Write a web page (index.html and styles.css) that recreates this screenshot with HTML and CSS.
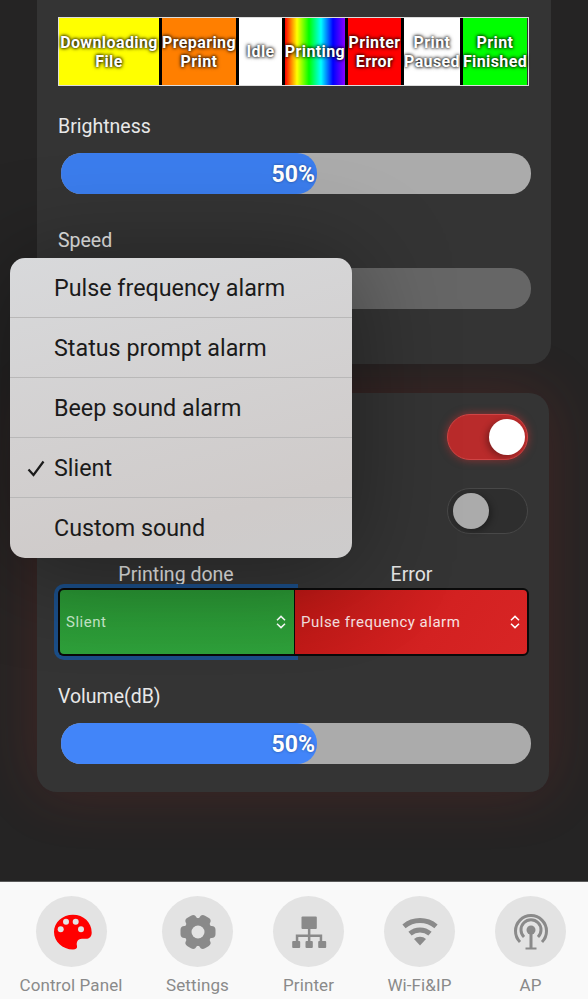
FILE: index.html
```html
<!DOCTYPE html>
<html lang="en">
<head>
  <meta charset="UTF-8">
  <title>Control Panel</title>
  <link rel="stylesheet" href="styles.css">
</head>
<body>
  <div class="app">
    <main class="content">
      <section class="card card-light">
        <div class="strip">
          <div class="seg seg-yellow">Downloading File</div>
          <div class="seg seg-orange">Preparing Print</div>
          <div class="seg seg-white">Idle</div>
          <div class="seg seg-rainbow">Printing</div>
          <div class="seg seg-red">Printer Error</div>
          <div class="seg seg-white">Print Paused</div>
          <div class="seg seg-green">Print Finished</div>
        </div>

        <div class="field-label field-first">Brightness</div>
        <div class="slider"><div class="slider-fill fill-dim">50%</div></div>

        <div class="field-label field-speed">Speed</div>
        <div class="slider slider-off"><div class="slider-fill"></div></div>
      </section>

      <section class="card card-sound">
        <div class="toggle-row">
          <div class="toggle toggle-on"><span class="knob"></span></div>
        </div>
        <div class="toggle-row toggle-row-next">
          <div class="toggle toggle-off"><span class="knob"></span></div>
        </div>

        <div class="select-heads">
          <div>Printing done</div>
          <div>Error</div>
        </div>
        <div class="selects">
          <div class="select select-green">
            <span>Slient</span>
            <svg class="updown" viewBox="0 0 12 16"><path d="M2 6.200 6 2.400l4 3.800M2 9.800l4 3.800 4-3.800"/></svg>
          </div>
          <div class="select select-red">
            <span>Pulse frequency alarm</span>
            <svg class="updown" viewBox="0 0 12 16"><path d="M2 6.200 6 2.400l4 3.800M2 9.800l4 3.800 4-3.800"/></svg>
          </div>
        </div>

        <div class="field-label field-volume">Volume(dB)</div>
        <div class="slider"><div class="slider-fill">50%</div></div>
      </section>
    </main>

    <nav class="tabs">
      <div class="tab tab-wide">
        <div class="tab-icon">
          <svg viewBox="0 0 44 44">
            <path class="palette" d="M24 4.800C13.500 4.800 5 12.500 5 22c0 9.500 8.500 17.500 19 17.500 3 0 4.500-1.500 4-3.500-.7-3 0-7 5-7.200h4c3.500 0 5.700-2.300 5.700-6.300C42.700 12.500 34.500 4.800 24 4.800z"/>
            <circle class="hole" cx="17" cy="11.800" r="3"/>
            <circle class="hole" cx="26.700" cy="11.800" r="3"/>
            <circle class="hole" cx="11.700" cy="19.200" r="3"/>
            <circle class="hole" cx="32" cy="19.200" r="3"/>
          </svg>
        </div>
        <div class="tab-name">Control Panel</div>
      </div>
      <div class="tab">
        <div class="tab-icon">
          <svg viewBox="0 0 44 44">
            <circle class="glyph" cx="22" cy="22" r="14"/>
            <rect class="glyph" x="4.500" y="16" width="35" height="12" rx="4"/>
            <rect class="glyph" x="4.500" y="16" width="35" height="12" rx="4" transform="rotate(60 22 22)"/>
            <rect class="glyph" x="4.500" y="16" width="35" height="12" rx="4" transform="rotate(120 22 22)"/>
            <circle class="hole" cx="22" cy="22" r="6.500"/>
          </svg>
        </div>
        <div class="tab-name">Settings</div>
      </div>
      <div class="tab">
        <div class="tab-icon">
          <svg viewBox="0 0 44 44">
            <rect class="glyph" x="14.500" y="6.500" width="15.300" height="12.500" rx="1"/>
            <path class="glyph" d="M20.900 18h2.500v6.500h11.800v7h-2.500V27H23.400v4.500h-2.500V27H11.300v4.500H8.800v-7h12.100z"/>
            <rect class="glyph" x="5.200" y="31" width="8" height="7" rx="1"/>
            <rect class="glyph" x="18.500" y="31" width="7.300" height="7" rx="1"/>
            <rect class="glyph" x="31.200" y="31" width="8" height="7" rx="1"/>
          </svg>
        </div>
        <div class="tab-name">Printer</div>
      </div>
      <div class="tab">
        <div class="tab-icon">
          <svg viewBox="0 0 44 44">
            <path class="wave" d="M6 16.300a25 25 0 0 1 32 0"/>
            <path class="wave" d="M12 23.600a15.500 15.500 0 0 1 20 0"/>
            <path class="glyph" d="M22 35.500 16 29a9 9 0 0 1 12 0z"/>
          </svg>
        </div>
        <div class="tab-name">Wi-Fi&amp;IP</div>
      </div>
      <div class="tab">
        <div class="tab-icon">
          <svg viewBox="0 0 44 44">
            <path class="wave wave-thin" d="M11 32a15.500 15.500 0 1 1 22 0"/>
            <path class="wave wave-thin" d="M15 27a10 10 0 1 1 14 0"/>
            <circle class="glyph" cx="22" cy="20" r="4.500"/>
            <path class="glyph" d="M20.500 22h3v15.500h4v2h-11v-2h4z"/>
          </svg>
        </div>
        <div class="tab-name">AP</div>
      </div>
    </nav>

    <ul class="menu">
      <li>Pulse frequency alarm</li>
      <li>Status prompt alarm</li>
      <li>Beep sound alarm</li>
      <li class="checked">
        <svg class="tick" viewBox="0 0 18 17"><path d="M1.500 9.500 6.500 15 16.500 1.500"/></svg>
        Slient
      </li>
      <li>Custom sound</li>
    </ul>
  </div>
</body>
</html>
```

FILE: styles.css
```css
body {
  margin: 0;
  font-family: Roboto, "Liberation Sans", sans-serif;
  background-color: #252424;
}
.app {
  position: relative;
  width: 588px;
  height: 999px;
  display: flex;
  flex-direction: column;
  overflow: hidden;
}
.content {
  flex: 1;
  overflow: hidden;
}
.card {
  background-color: #343434;
  box-sizing: border-box;
  margin-left: 37px;
}
.card-light {
  position: relative;
  z-index: 1;
  width: 514px;
  height: 364px;
  padding: 17px 21px 0;
  border-radius: 0 0 20px 20px;
}
.card-sound {
  width: 512px;
  height: 399px;
  margin-top: 29px;
  padding: 21px 21px 0;
  border-radius: 20px;
  box-shadow: 0 0 60px rgba(190, 45, 35, 0.2);
}

.strip {
  display: grid;
  grid-template-columns: 100px 77px 46px 63px 56px 59px 67px;
  width: 471px;
  height: 69px;
  box-sizing: border-box;
  border: 1.500px solid #dcdcdc;
}
.seg {
  display: flex;
  align-items: center;
  justify-content: center;
  box-sizing: border-box;
  border-left: 3px solid #000;
  font-size: 16px;
  font-weight: 700;
  letter-spacing: 0.4px;
  line-height: 19px;
  text-align: center;
  color: #fff;
  text-shadow: 0 0 3px #000, 0 0 4px rgba(0, 0, 0, 0.8);
}
.seg:first-child {
  border-left: none;
}
.seg-yellow { background-color: #ff0; }
.seg-orange { background-color: #ff7f00; }
.seg-white { background-color: #fff; }
.seg-red { background-color: #f00; }
.seg-green { background-color: #0f0; }
.seg-rainbow {
  background: linear-gradient(90deg, #f00, #ff0, #0f0, #0ff, #00f, #80f);
}

.field-label {
  font-size: 19.500px;
  line-height: 22px;
  color: #e8e8e8;
}
.field-first { margin-top: 30px; }
.field-speed { margin-top: 36px; }
.field-volume { margin-top: 30px; }

.slider {
  width: 470px;
  height: 41px;
  margin: 15px 0 0 3px;
  background-color: #ababab;
  border-radius: 20px;
}
.slider-off {
  background-color: #666;
  margin-top: 16px;
}
.slider-fill {
  width: 256px;
  height: 41px;
  box-sizing: border-box;
  padding-right: 2px;
  background-color: #4285f9;
  border-radius: 20px;
  font-size: 23px;
  font-weight: 700;
  line-height: 44px;
  text-align: right;
  color: #fff;
  text-shadow: 0 0 3px rgba(0, 0, 0, 0.4);
}
.fill-dim {
  background-color: #3b7ded;
}

.toggle-row {
  display: flex;
  justify-content: flex-end;
}
.toggle-row-next {
  margin-top: 28px;
}
.toggle {
  display: flex;
  align-items: center;
  width: 81px;
  height: 46px;
  box-sizing: border-box;
  border-radius: 23px;
}
.toggle-on {
  justify-content: flex-end;
  padding-right: 2px;
  background-color: #b92b2b;
  border: 1px solid #cf4545;
  box-shadow: 0 0 9px rgba(225, 50, 50, 0.55);
}
.toggle-off {
  padding-left: 5px;
  background-color: #2e2e2e;
  border: 1px solid #484848;
}
.knob {
  width: 36px;
  height: 36px;
  border-radius: 50%;
}
.toggle-on .knob {
  background-color: #fff;
  box-shadow: -3px 2px 6px rgba(0, 0, 0, 0.3);
}
.toggle-off .knob {
  background-color: #ababab;
  box-shadow: 3px 2px 6px rgba(0, 0, 0, 0.3);
}

.select-heads {
  display: grid;
  grid-template-columns: 236px 235px;
  margin-top: 28px;
  font-size: 19.500px;
  line-height: 26px;
  text-align: center;
  color: #e6e6e6;
}
.selects {
  display: grid;
  grid-template-columns: 236px 235px;
}
.select {
  position: relative;
  display: flex;
  align-items: center;
  justify-content: space-between;
  height: 68px;
  box-sizing: border-box;
  padding: 0 6px;
  border: 2px solid #0a0a0a;
  font-size: 15px;
  letter-spacing: 0.5px;
}
.select-green {
  padding-right: 7px;
  border-right: none;
  border-radius: 6px 0 0 6px;
  background: linear-gradient(180deg, #299433, #2ea03a);
  color: #c8eacb;
  box-shadow: 0 0 0 4px #1b4e88;
}
.select-red {
  border-left-width: 1px;
  border-radius: 0 6px 6px 0;
  background: linear-gradient(125deg, #bb1714, #d32121 60%, #d82525);
  color: #f8e2e2;
}
.updown {
  width: 12px;
  height: 16px;
  fill: none;
  stroke: #fff;
  stroke-width: 1.500;
}

.tabs {
  display: flex;
  gap: 40px;
  height: 118px;
  box-sizing: border-box;
  padding: 14px 0 0 20px;
  background-color: #f9f9f9;
  border-top: 1px solid #5a5a5a;
}
.tab {
  display: flex;
  flex-direction: column;
  align-items: center;
  width: 71px;
}
.tab-wide {
  width: 102px;
}
.tab-icon {
  display: flex;
  align-items: center;
  justify-content: center;
  width: 71px;
  height: 71px;
  flex-shrink: 0;
  border-radius: 50%;
  background-color: #e3e3e3;
}
.tab-icon svg {
  width: 44px;
  height: 44px;
}
.tab-name {
  margin-top: 8px;
  font-size: 17px;
  letter-spacing: 0.1px;
  line-height: 20px;
  color: #8a8a8a;
  white-space: nowrap;
}
.palette { fill: #f00; }
.hole { fill: #e3e3e3; }
.glyph { fill: #8a8a8a; }
.wave {
  fill: none;
  stroke: #8a8a8a;
  stroke-width: 5;
}
.wave-thin {
  stroke-width: 3;
}

.menu {
  position: absolute;
  z-index: 2;
  left: 10px;
  top: 258px;
  width: 342px;
  margin: 0;
  padding: 0;
  list-style: none;
  background: linear-gradient(165deg, #d8d9db, #cfcbca 80%, #cdcccc);
  border-radius: 15px;
  box-shadow: 0 6px 100px rgba(0, 0, 0, 0.4);
  color: #1b1b1b;
  font-size: 23.300px;
}
.menu li {
  position: relative;
  height: 60px;
  box-sizing: border-box;
  padding-left: 44px;
  line-height: 60px;
  border-bottom: 1px solid #b9b8b8;
}
.menu li:last-child {
  border-bottom: none;
}
.tick {
  position: absolute;
  left: 17px;
  top: 22px;
  width: 18px;
  height: 17px;
  fill: none;
  stroke: #1b1b1b;
  stroke-width: 2.200;
}
```
